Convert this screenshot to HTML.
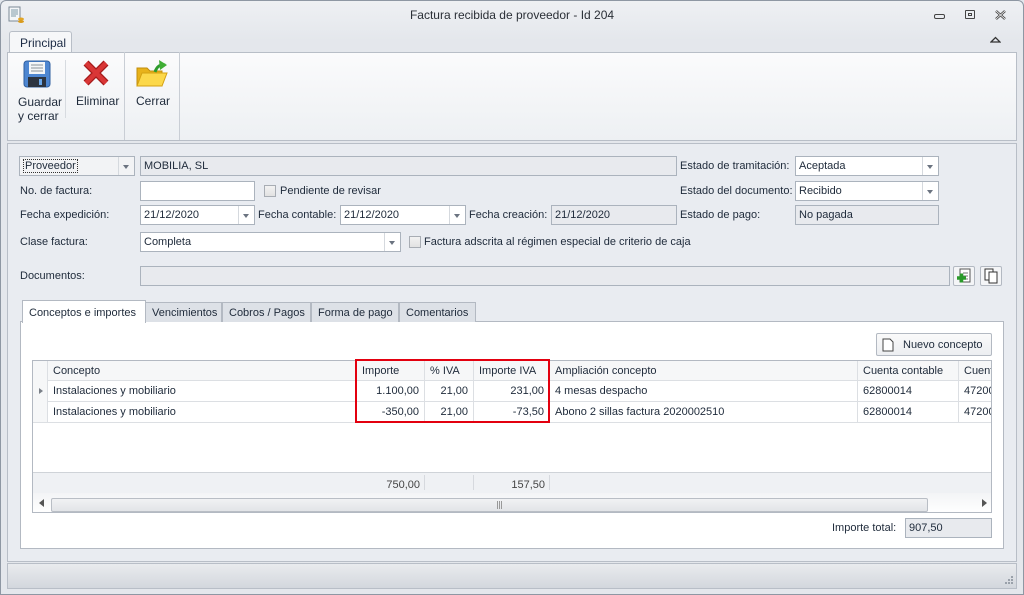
<!DOCTYPE html>
<html><head><meta charset="utf-8"><style>
*{margin:0;padding:0;box-sizing:border-box}
body{width:1024px;height:595px;overflow:hidden;background:#e3e7ed;font-family:"Liberation Sans",Tahoma,sans-serif;font-size:11px;color:#1e2a3a;position:relative}
.a{position:absolute}
.t{position:absolute;white-space:nowrap;line-height:13px}
.box{position:absolute;border:1px solid #abb3bd;background:#fff;height:20px;padding:3px 3px;line-height:13px;white-space:nowrap;overflow:hidden}
.g{background:#e8eaee}
.dd{position:absolute;right:0;top:0;width:16px;height:18px;border-left:1px solid #d5d9de}
.dd:after{content:"";position:absolute;left:4px;top:8px;border:3.5px solid transparent;border-top:4px solid #6b7380}
.cb{position:absolute;width:12px;height:12px;border:1px solid #a8adb4;background:linear-gradient(#f2f2f2,#e2e2e2)}
.tab{position:absolute;top:302px;height:20px;border:1px solid #b3b9c2;border-bottom:none;background:#dde1e7;padding:4px 6px;line-height:12px;white-space:nowrap}
.cell{position:absolute;height:21px;border-right:1px solid #dcdfe3;border-bottom:1px solid #dcdfe3;padding:4px 5px;line-height:12px;white-space:nowrap;overflow:hidden}
.r{text-align:right}
</style></head><body>
<!-- window frame -->
<div class="a" style="left:0;top:0;width:1024px;height:595px;border:1px solid #8e97a3;border-radius:6px 6px 0 0;background:linear-gradient(#eef0f3,#e4e7ec 40px)"></div>
<!-- app icon -->
<svg class="a" style="left:8px;top:6px" width="16" height="18"><rect x="1" y="1" width="11" height="14" fill="#f4f6f8" stroke="#7c8a96"/><path d="M3 4h7M3 6h7M3 8h7M3 10h5" stroke="#7e9aa8"/><ellipse cx="13" cy="13" rx="3" ry="1.5" fill="#e2a526"/><ellipse cx="13" cy="15.5" rx="3" ry="1.5" fill="#d89a1c"/></svg>
<div class="t" style="left:0;width:1024px;text-align:center;top:9px;font-size:12px;color:#2a2f36">Factura recibida de proveedor - Id 204</div>
<div class="a" style="left:934px;top:14px;width:11px;height:5px;border:1px solid #444;border-radius:2px"></div>
<div class="a" style="left:965px;top:10px;width:10px;height:9px;border:1px solid #444;border-radius:1px"><div style="margin:2px;height:3px;border:1px solid #444"></div></div>
<svg class="a" style="left:995px;top:10px" width="11" height="10"><path d="M1 1L10 9M10 1L1 9" stroke="#444" stroke-width="2.5"/><path d="M1 1L10 9M10 1L1 9" stroke="#fff" stroke-width="0.8"/></svg>
<svg class="a" style="left:990px;top:36px" width="11" height="8"><path d="M1 6L5.5 1.5L10 6Z" fill="none" stroke="#333" stroke-width="1.3"/></svg>
<!-- ribbon tab -->
<div class="a" style="left:9px;top:31px;width:63px;height:22px;border:1px solid #b8bec7;border-bottom:none;border-radius:3px 3px 0 0;background:#f6f7f9"></div>
<div class="t" style="left:20px;top:37px;font-size:12px;color:#1b2a44">Principal</div>
<div class="a" style="left:7px;top:52px;width:1010px;height:89px;border:1px solid #b8bec7;background:linear-gradient(#fbfbfc,#edf0f3)"></div>
<div class="a" style="left:7px;top:52px;width:3px;height:1px;background:#b8bec7"></div>
<div class="a" style="left:65px;top:60px;width:1px;height:58px;background:#d7dbe0"></div>
<div class="a" style="left:124px;top:52px;width:1px;height:88px;background:#c9ced5"></div>
<div class="a" style="left:179px;top:52px;width:1px;height:88px;background:#c9ced5"></div>
<!-- floppy -->
<svg class="a" style="left:23px;top:60px" width="28" height="28"><rect x="1" y="1" width="26" height="26" rx="3" fill="#4d86d1" stroke="#2f5f9f"/><rect x="6" y="2" width="16" height="12" fill="#f4f6f8"/><path d="M8 5h12M8 8h12M8 11h12" stroke="#8a9199"/><rect x="5" y="17" width="18" height="10" fill="#2c3440"/><rect x="16" y="19" width="3" height="6" fill="#6aa7e8"/></svg>
<div class="t" style="left:18px;top:95px;font-size:12px;line-height:14px">Guardar<br>y cerrar</div>
<svg class="a" style="left:83px;top:60px" width="26" height="26"><path d="M3 3L23 23M23 3L3 23" stroke="#a51a1a" stroke-width="7"/><path d="M3 3L23 23M23 3L3 23" stroke="#d93636" stroke-width="4.5"/></svg>
<div class="t" style="left:76px;top:95px;font-size:12px">Eliminar</div>
<svg class="a" style="left:135px;top:58px" width="34" height="32"><path d="M2 10h10l3 3h12v15H2z" fill="#e8b21a" stroke="#c18d0c"/><path d="M2 28L7 15h25l-5 13z" fill="#fcd84a" stroke="#d4a112"/><path d="M20 14C22 8 26 6 30 7" fill="none" stroke="#2c9a2c" stroke-width="3"/><path d="M24 2l8 5-7 5z" fill="#3fae35"/></svg>
<div class="t" style="left:136px;top:95px;font-size:12px">Cerrar</div>
<!-- main panel -->
<div class="a" style="left:7px;top:143px;width:1010px;height:419px;border:1px solid #b8bec7;background:#e9ecf1"></div>
<div class="a" style="left:12px;top:145px;width:1000px;height:413px;background:#e9ecf1"></div>
<!-- Row 1 -->
<div class="box" style="left:19px;top:156px;width:116px;background:#f2f3f5"><span style="border:1px dotted #333;padding:0 1px">Proveedor</span><div class="dd"></div></div>
<div class="box g" style="left:140px;top:156px;width:537px">MOBILIA, SL</div>
<div class="t" style="left:680px;top:160px">Estado de tramitación:</div>
<div class="box" style="left:795px;top:156px;width:144px">Aceptada<div class="dd"></div></div>
<!-- Row 2 -->
<div class="t" style="left:20px;top:185px">No. de factura:</div>
<div class="box" style="left:140px;top:181px;width:115px"></div>
<div class="cb" style="left:264px;top:185px"></div>
<div class="t" style="left:280px;top:185px">Pendiente de revisar</div>
<div class="t" style="left:680px;top:185px">Estado del documento:</div>
<div class="box" style="left:795px;top:181px;width:144px">Recibido<div class="dd"></div></div>
<!-- Row 3 -->
<div class="t" style="left:20px;top:209px">Fecha expedición:</div>
<div class="box" style="left:140px;top:205px;width:115px">21/12/2020<div class="dd"></div></div>
<div class="t" style="left:258px;top:209px">Fecha contable:</div>
<div class="box" style="left:340px;top:205px;width:126px">21/12/2020<div class="dd"></div></div>
<div class="t" style="left:469px;top:209px">Fecha creación:</div>
<div class="box g" style="left:551px;top:205px;width:126px">21/12/2020</div>
<div class="t" style="left:680px;top:209px">Estado de pago:</div>
<div class="box g" style="left:795px;top:205px;width:144px">No pagada</div>
<!-- Row 4 -->
<div class="t" style="left:20px;top:236px">Clase factura:</div>
<div class="box" style="left:140px;top:232px;width:261px">Completa<div class="dd"></div></div>
<div class="cb" style="left:409px;top:236px"></div>
<div class="t" style="left:424px;top:236px">Factura adscrita al régimen especial de criterio de caja</div>
<!-- Row 5 -->
<div class="t" style="left:20px;top:270px">Documentos:</div>
<div class="box g" style="left:140px;top:266px;width:810px"></div>
<div class="a" style="left:953px;top:266px;width:22px;height:20px;border:1px solid #b3b9c2;border-radius:2px;background:#f4f5f7"></div>
<svg class="a" style="left:956px;top:268px" width="16" height="16"><rect x="4" y="1" width="10" height="13" fill="#fff" stroke="#555"/><path d="M7 5h5M7 8h5M7 11h5" stroke="#777"/><path d="M1 10h9M5.5 5.5v9" stroke="#2a9a2a" stroke-width="3.5"/></svg>
<div class="a" style="left:980px;top:266px;width:22px;height:20px;border:1px solid #b3b9c2;border-radius:2px;background:#f4f5f7"></div>
<svg class="a" style="left:984px;top:268px" width="14" height="16"><rect x="1" y="1" width="8" height="11" fill="#fff" stroke="#333"/><rect x="5" y="4" width="8" height="11" fill="#fff" stroke="#333"/></svg>
<!-- tabs -->
<div class="a" style="left:20px;top:321px;width:984px;height:228px;border:1px solid #b3b9c2;background:#fff"></div>
<div class="tab" style="left:22px;top:300px;height:23px;width:124px;background:#fff;padding-top:6px">Conceptos e importes</div>
<div class="tab" style="left:145px;width:77px">Vencimientos</div>
<div class="tab" style="left:222px;width:89px">Cobros / Pagos</div>
<div class="tab" style="left:311px;width:88px">Forma de pago</div>
<div class="tab" style="left:399px;width:77px">Comentarios</div>
<!-- Nuevo concepto -->
<div class="a" style="left:876px;top:333px;width:116px;height:23px;border:1px solid #b3b9c2;border-radius:2px;background:linear-gradient(#fafafa,#eceef1)"></div>
<svg class="a" style="left:882px;top:338px" width="12" height="14"><path d="M1 1h7l3 3v9H1z" fill="#fff" stroke="#444"/></svg>
<div class="t" style="left:903px;top:339px">Nuevo concepto</div>
<!-- grid -->
<div class="a" style="left:32px;top:360px;width:960px;height:153px;border:1px solid #b3b9c2;background:#fff;overflow:hidden">
 <div class="a" style="left:0;top:0;width:960px;height:20px;background:#f6f7f8;border-bottom:1px solid #cfd3d8"></div>
 <div class="cell" style="left:0;top:0;width:15px;height:62px;background:#f6f7f8"></div>
 <div class="cell" style="left:15px;top:0;width:309px;height:20px">Concepto</div>
 <div class="cell" style="left:324px;top:0;width:68px;height:20px">Importe</div>
 <div class="cell" style="left:392px;top:0;width:49px;height:20px">% IVA</div>
 <div class="cell" style="left:441px;top:0;width:76px;height:20px">Importe IVA</div>
 <div class="cell" style="left:517px;top:0;width:308px;height:20px">Ampliación concepto</div>
 <div class="cell" style="left:825px;top:0;width:101px;height:20px">Cuenta contable</div>
 <div class="cell" style="left:926px;top:0;width:40px;height:20px">Cuent</div>
 <div class="a" style="left:6px;top:27px;border:3px solid transparent;border-left:4px solid #7a8088"></div>
 <div class="cell" style="left:15px;top:20px;width:309px">Instalaciones y mobiliario</div>
 <div class="cell r" style="left:324px;top:20px;width:68px">1.100,00</div>
 <div class="cell r" style="left:392px;top:20px;width:49px">21,00</div>
 <div class="cell r" style="left:441px;top:20px;width:76px">231,00</div>
 <div class="cell" style="left:517px;top:20px;width:308px">4 mesas despacho</div>
 <div class="cell" style="left:825px;top:20px;width:101px">62800014</div>
 <div class="cell" style="left:926px;top:20px;width:40px">47200</div>
 <div class="cell" style="left:15px;top:41px;width:309px">Instalaciones y mobiliario</div>
 <div class="cell r" style="left:324px;top:41px;width:68px">-350,00</div>
 <div class="cell r" style="left:392px;top:41px;width:49px">21,00</div>
 <div class="cell r" style="left:441px;top:41px;width:76px">-73,50</div>
 <div class="cell" style="left:517px;top:41px;width:308px">Abono 2 sillas factura 2020002510</div>
 <div class="cell" style="left:825px;top:41px;width:101px">62800014</div>
 <div class="cell" style="left:926px;top:41px;width:40px">47200</div>
 <div class="a" style="left:0;top:111px;width:960px;height:21px;background:#eff1f4;border-top:1px solid #cfd3d8"></div>
 <div class="t" style="left:324px;top:118px;width:63px;text-align:right;color:#444">750,00</div>
 <div class="a" style="left:391px;top:114px;width:1px;height:15px;background:#d6d9de"></div>
 <div class="a" style="left:440px;top:114px;width:1px;height:15px;background:#d6d9de"></div>
 <div class="a" style="left:516px;top:114px;width:1px;height:15px;background:#d6d9de"></div>
 <div class="t" style="left:441px;top:118px;width:71px;text-align:right;color:#444">157,50</div>
 <div class="a" style="left:0;top:132px;width:960px;height:20px;background:linear-gradient(#f3f4f6,#fff)"></div>
 <div class="a" style="left:6px;top:138px;border:4px solid transparent;border-right:5px solid #555;border-left:0"></div>
 <div class="a" style="left:18px;top:137px;width:877px;height:14px;border:1px solid #b9bec5;border-radius:2px;background:linear-gradient(#f1f2f4,#e2e4e8)"></div>
 <div class="a" style="left:466px;top:140px;width:1px;height:8px;background:#999;box-shadow:2px 0 #999,-2px 0 #999"></div>
 <div class="a" style="left:949px;top:138px;border:4px solid transparent;border-left:5px solid #555;border-right:0"></div>
</div>
<div class="a" style="left:355px;top:359px;width:195px;height:64px;border:2px solid #e3000f"></div>
<div class="t" style="left:832px;top:522px">Importe total:</div>
<div class="box g" style="left:905px;top:518px;width:87px">907,50</div>
<!-- status bar -->
<div class="a" style="left:7px;top:563px;width:1010px;height:26px;border:1px solid #b8bec7;background:linear-gradient(#e9ebee,#d3d7dd)"></div>
<svg class="a" style="left:1004px;top:575px" width="10" height="10"><g fill="#9aa1aa"><rect x="7" y="1" width="2" height="2"/><rect x="4" y="4" width="2" height="2"/><rect x="7" y="4" width="2" height="2"/><rect x="1" y="7" width="2" height="2"/><rect x="4" y="7" width="2" height="2"/><rect x="7" y="7" width="2" height="2"/></g></svg>
</body></html>
